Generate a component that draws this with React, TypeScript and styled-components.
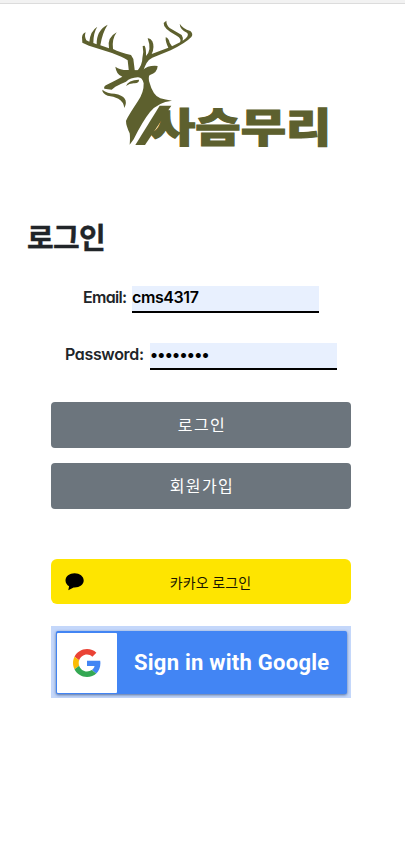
import React from "react";
import styled, { createGlobalStyle } from "styled-components";

const GlobalStyle = createGlobalStyle`
  *, *::before, *::after { box-sizing: border-box; }
  body { margin: 0; background: #fff; color: #212529; font-family: "Noto Sans CJK KR", sans-serif; }
`;

const Page = styled.div`
  display: flex;
  flex-direction: column;
  min-height: 853px;
  overflow: hidden;
`;

const TopEdge = styled.div`
  height: 4px;
  background: #f2f2f2;
  border-bottom: 1px solid #dcdcdc;
`;

const LogoArea = styled.header`
  padding: 6px 0 0 70px;
  height: 151px;
  svg { display: block; }
`;

const Title = styled.h1`
  margin: 59px 0 0 27px;
  height: 46px;
  font-size: 29px;
  line-height: 44px;
  font-weight: 700;
  letter-spacing: -0.7px;
  -webkit-text-stroke: 0.4px #212529;
`;

const Form = styled.form`
  display: flex;
  flex-direction: column;
  align-items: center;
  width: 402px;
  padding-top: 26px;
`;

const Field = styled.label<{ $gap: number }>`
  display: flex;
  height: 27px;
  margin-bottom: ${(p) => p.$gap}px;
  font-family: Inter, sans-serif;
  font-feature-settings: "cv11";
  font-size: 16px;
  font-weight: 600;
  line-height: 22px;
`;

const Caption = styled.span<{ $width: number; $spacing: number }>`
  width: ${(p) => p.$width}px;
  letter-spacing: ${(p) => p.$spacing}px;
  white-space: nowrap;
`;

const Input = styled.input<{ $spacing?: number }>`
  width: 187px;
  height: 27px;
  padding: 0 0 4px;
  border: 0;
  border-bottom: 2px solid #000;
  border-radius: 0;
  outline: 0;
  background: #e8f0fe;
  color: #000;
  font: inherit;
  font-feature-settings: inherit;
  letter-spacing: ${(p) => p.$spacing ?? 0}px;
`;

const Button = styled.button`
  width: 300px;
  height: 46px;
  margin-bottom: 15px;
  padding: 0 0 3px 2px;
  border: 0;
  border-radius: 4px;
  background: #6c757d;
  color: #fff;
  font-family: "Noto Sans CJK KR", sans-serif;
  font-size: 16px;
  letter-spacing: 1.4px;
`;

const KakaoButton = styled.button`
  display: flex;
  align-items: center;
  width: 300px;
  height: 45px;
  margin-top: 35px;
  padding: 0 0 0 14px;
  border: 0;
  border-radius: 6px;
  background: #fee500;
  color: #191600;
  font-family: "Noto Sans CJK KR", sans-serif;
  font-size: 14px;
  letter-spacing: 0.15px;
  span { flex: 1; padding-right: 14px; text-align: center; }
`;

const GoogleFrame = styled.div`
  width: 300px;
  height: 72px;
  margin-top: 22px;
  padding: 5px;
  background: #c4d7fa;
`;

const GoogleButton = styled.button`
  display: flex;
  align-items: center;
  width: 291px;
  height: 63px;
  padding: 0 0 0 1px;
  border: 0;
  border-radius: 2px;
  background: #4285f4;
  box-shadow: 0 1px 3px rgba(35, 65, 120, 0.7);
  color: #fff;
  font-family: Roboto, sans-serif;
  font-size: 22px;
  font-weight: 700;
  white-space: nowrap;
  > span:last-child { padding: 0 0 1px 17px; letter-spacing: 0.25px; }
`;

const GoogleMark = styled.span`
  display: grid;
  place-items: center;
  width: 60px;
  height: 60px;
  border-radius: 1px;
  background: #fff;
`;

function DeerLogo() {
  return (
    <svg width="270" height="145" viewBox="0 0 810 435" fill="#5d602e" role="img">
      {/* left antler */}
      <path d="M36 82 Q37 70 47 67 Q42 79 49 91 L58 95 Q61 63 82 50 Q70 68 70 99 L80 103 Q79 61 113 44 Q97 68 91 106 L117 115 Q110 83 140 67 Q125 88 129 117 Q150 128 183 135 L190 147 L195 187 L177 187 L173 151 Q158 141 126 129 L57 107 L37 98 Z" />
      {/* right antler */}
      <path d="M199 187 Q218 164 217 145 Q222 125 218 108 L224 107 Q229 118 228 138 Q246 120 233 85 Q241 84 247 94 Q255 111 245 132 L295 113 Q286 96 287 82 Q296 84 299 98 L306 109 L330 97 Q336 86 320 77 Q279 56 281 39 L289 32 Q289 45 299 54 L335 75 Q341 85 338 92 Q359 79 352 69 Q330 59 329 41 Q338 55 361 63 Q371 72 364 81 Q348 98 302 121 L247 143 Q227 152 219 187 Z" />
      {/* head, ears and neck */}
      <path d="M136 170 Q151 181 176 180 L218 181 Q234 165 263 168 Q262 188 240 195 Q235 197 237 213 Q249 258 271 265 Q285 269 306 272 Q263 277 240 306 Q218 333 191 388 L179 404 Q181 382 179 370 Q168 347 168 333 Q171 323 204 273 Q222 247 221 220 Q217 201 203 202 Q181 203 168 215 Q151 222 136 230 L125 239 L103 236 Q100 230 109 225 Q137 211 157 200 Q139 194 136 170 Z" />
      <path d="M168 228 Q174 210 207 209 Q208 219 194 220 Q179 219 168 228 Z" />
      <path d="M97 239 Q112 251 134 251 Q180 259 163 294 Q161 275 145 266 Q131 259 113 257 Q96 250 97 239 Z" />
      {/* slanted stroke joining the neck to the wordmark */}
      <path d="M196 405 L269 287 L304 287 L225 405 Z" />
      <text
        transform="translate(240 395) scale(1 0.84)"
        fontFamily="'Noto Sans CJK KR', sans-serif"
        fontSize="143"
        fontWeight="900"
        textLength="544"
        lengthAdjust="spacingAndGlyphs"
        stroke="#5d602e"
        strokeWidth="4"
      >
        사슴무리
      </text>
    </svg>
  );
}

function ChatIcon() {
  return (
    <svg width="19" height="18" viewBox="0 0 19 18">
      <path d="M9.600 .3C4.500 .3 .5 3.400 .5 7.400c0 2.400 1.400 4.500 3.600 5.800L3.300 17.200l5.300-2.800h1c5.100 0 9.100-3.100 9.100-7S14.700 .3 9.600 .3Z" />
    </svg>
  );
}

function GoogleIcon() {
  return (
    <svg width="28" height="28" viewBox="0 0 48 48">
      <path fill="#ea4335" d="M24 9.500c3.540 0 6.710 1.220 9.210 3.600l6.850-6.850C35.900 2.380 30.470 0 24 0 14.620 0 6.510 5.380 2.560 13.220l7.980 6.190C12.430 13.720 17.740 9.500 24 9.500z" />
      <path fill="#4285f4" d="M46.980 24.550c0-1.570-.15-3.090-.38-4.550H24v9.020h12.940c-.58 2.960-2.260 5.480-4.780 7.180l7.730 6c4.510-4.180 7.090-10.360 7.090-17.650z" />
      <path fill="#fbbc05" d="M10.530 28.590c-.48-1.450-.76-2.990-.76-4.590s.27-3.140.76-4.590l-7.980-6.190C.92 16.460 0 20.120 0 24c0 3.880.92 7.540 2.560 10.780l7.970-6.190z" />
      <path fill="#34a853" d="M24 48c6.480 0 11.930-2.130 15.890-5.810l-7.730-6c-2.150 1.450-4.920 2.300-8.160 2.300-6.260 0-11.570-4.220-13.470-9.910l-7.980 6.190C6.510 42.620 14.620 48 24 48z" />
    </svg>
  );
}

export default function App() {
  return (
    <Page>
      <GlobalStyle />
      <TopEdge />
      <LogoArea>
        <DeerLogo />
      </LogoArea>
      <Title>로그인</Title>
      <Form onSubmit={(e) => e.preventDefault()}>
        <Field $gap={30}>
          <Caption $width={49} $spacing={-0.7}>Email:</Caption>
          <Input type="text" defaultValue="cms4317" $spacing={-0.4} />
        </Field>
        <Field $gap={32}>
          <Caption $width={85} $spacing={-0.35}>Password:</Caption>
          <Input type="password" defaultValue="password" $spacing={-0.7} />
        </Field>
        <Button type="submit">로그인</Button>
        <Button type="button">회원가입</Button>
        <KakaoButton type="button">
          <ChatIcon />
          <span>카카오 로그인</span>
        </KakaoButton>
        <GoogleFrame>
          <GoogleButton type="button">
            <GoogleMark>
              <GoogleIcon />
            </GoogleMark>
            <span>Sign in with Google</span>
          </GoogleButton>
        </GoogleFrame>
      </Form>
    </Page>
  );
}
